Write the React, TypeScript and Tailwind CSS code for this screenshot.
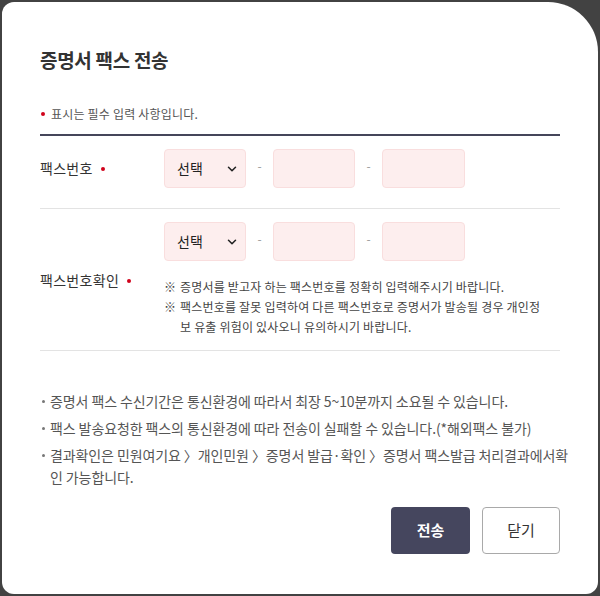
import React from "react";
import { ChevronDown } from "lucide-react";

const font = { fontFamily: '"Noto Sans CJK KR", "Noto Sans", sans-serif' };

function Dot() {
  return <span className="inline-block w-[4px] h-[4px] rounded-full bg-[#d0021b]" />;
}

function PhoneInputs() {
  return (
    <div className="flex items-center">
      <div className="w-[82px] h-[39px] rounded-[4px] bg-[#fdeeee] border border-[#f9dede] flex items-center justify-between pl-[12px] pr-[6px]">
        <span className="text-[14px] text-[#222]">선택</span>
        <ChevronDown size={14} strokeWidth={2.6} className="text-[#222]" />
      </div>
      <span className="w-[27px] text-center text-[12px] text-[#999] -mt-[5px]">-</span>
      <div className="w-[82px] h-[39px] rounded-[4px] bg-[#fdeeee] border border-[#f9dede]" />
      <span className="w-[27px] text-center text-[12px] text-[#999] -mt-[5px]">-</span>
      <div className="w-[83px] h-[39px] rounded-[4px] bg-[#fdeeee] border border-[#f9dede]" />
    </div>
  );
}

function Bullet() {
  return (
    <span className="w-[10px] shrink-0 flex pt-[10px] pl-[2px]">
      <span className="w-[3px] h-[3px] rounded-full bg-[#777]" />
    </span>
  );
}

export default function App() {
  return (
    <div className="w-[600px] h-[596px] bg-[#424242] pt-[2px] pl-[2px]" style={font}>
      <div className="w-[596px] h-[592px] bg-white rounded-tl-[12px] rounded-tr-[50px] rounded-bl-[12px] rounded-br-[12px] pt-[45px] px-[38px]">
        <h1 className="text-[19px] leading-[26px] font-bold text-[#333] tracking-[-0.3px]">증명서 팩스 전송</h1>

        <div className="mt-[32px] flex items-center gap-[6px] h-[18px] pl-[1px]">
          <Dot />
          <span className="text-[12px] leading-[18px] text-[#555] tracking-[0.2px]">표시는 필수 입력 사항입니다.</span>
        </div>
        <div className="mt-[11px] h-[2px] bg-[#45465a]" />

        <div className="flex items-center pt-[13px] pb-[20px] border-b border-[#e3e3e3]">
          <div className="w-[124px] flex items-center gap-[8px]">
            <span className="text-[14px] text-[#333] tracking-[0.3px]">팩스번호</span>
            <Dot />
          </div>
          <PhoneInputs />
        </div>

        <div className="flex items-center pt-[13px] pb-[13px] border-b border-[#e3e3e3]">
          <div className="w-[124px] flex items-center gap-[8px] mt-[2px]">
            <span className="text-[14px] text-[#333] tracking-[0.3px]">팩스번호확인</span>
            <Dot />
          </div>
          <div className="flex flex-col">
            <PhoneInputs />
            <div className="mt-[16px] text-[12px] leading-[20px] text-[#444] tracking-[0.2px]">
              <div className="flex">
                <span className="w-[16px] shrink-0">※</span>
                <span>증명서를 받고자 하는 팩스번호를 정확히 입력해주시기 바랍니다.</span>
              </div>
              <div className="flex">
                <span className="w-[16px] shrink-0">※</span>
                <span className="whitespace-nowrap">
                  팩스번호를 잘못 입력하여 다른 팩스번호로 증명서가 발송될 경우 개인정
                  <br />
                  보 유출 위험이 있사오니 유의하시기 바랍니다.
                </span>
              </div>
            </div>
          </div>
        </div>

        <ul className="mt-[39px] flex flex-col gap-[5px] text-[14px] leading-[22px] text-[#555] tracking-[-0.1px]">
          <li className="flex">
            <Bullet />
            <span className="whitespace-nowrap">증명서 팩스 수신기간은 통신환경에 따라서 최장 5~10분까지 소요될 수 있습니다.</span>
          </li>
          <li className="flex">
            <Bullet />
            <span className="whitespace-nowrap">팩스 발송요청한 팩스의 통신환경에 따라 전송이 실패할 수 있습니다.(*해외팩스 불가)</span>
          </li>
          <li className="flex">
            <Bullet />
            <span className="whitespace-nowrap">
              결과확인은 민원여기요 〉개인민원 〉증명서 발급·확인 〉증명서 팩스발급 처리결과에서확
              <br />
              인 가능합니다.
            </span>
          </li>
        </ul>

        <div className="mt-[19px] flex justify-end gap-[12px]">
          <button className="w-[79px] h-[47px] rounded-[4px] bg-[#45465e] text-white text-[15px] font-bold">전송</button>
          <button className="w-[78px] h-[47px] rounded-[4px] bg-white border border-[#a9a9a9] text-[#333] text-[15px]">닫기</button>
        </div>
      </div>
    </div>
  );
}
